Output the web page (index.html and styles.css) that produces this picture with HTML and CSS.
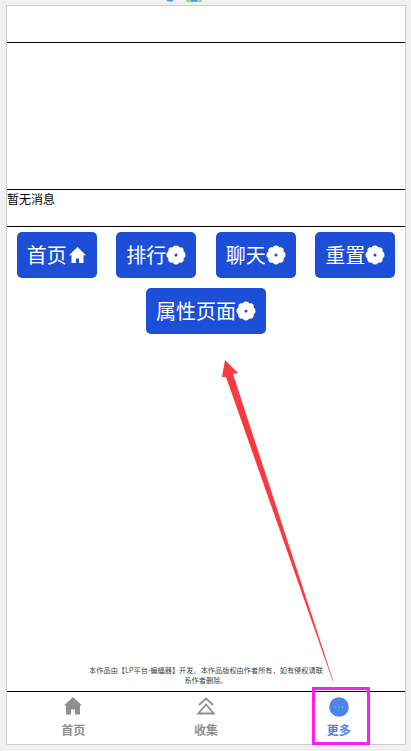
FILE: index.html
```html
<!DOCTYPE html>
<html lang="zh">
<head>
<meta charset="utf-8">
<title>更多</title>
<link rel="stylesheet" href="styles.css">
</head>
<body>
<svg class="top-glyphs" width="40" height="2" viewBox="0 0 40 2"><rect x="0" y="0" width="6" height="1.5" fill="#3aa0f5"/><rect x="19" y="0" width="16" height="2" fill="#8fe08f"/><rect x="24" y="0" width="6" height="1.5" fill="#3aa0f5"/></svg>
<main class="frame">
  <div class="head"></div>
  <div class="feed"></div>
  <div class="status">暂无消息</div>
  <nav class="actions">
    <button class="btn">首页<svg class="ico" viewBox="0 0 20 20"><path fill="#fff" d="M10.500 2 2 10.200h2.500V18H9v-4.500h3V18h4.500v-7.800H19L10.500 2z"/></svg></button>
    <button class="btn">排行<svg class="ico" viewBox="0 0 20 20"><use href="#flower"/></svg></button>
    <button class="btn">聊天<svg class="ico" viewBox="0 0 20 20"><use href="#flower"/></svg></button>
    <button class="btn">重置<svg class="ico" viewBox="0 0 20 20"><use href="#flower"/></svg></button>
    <button class="btn">属性页面<svg class="ico" viewBox="0 0 20 20"><use href="#flower"/></svg></button>
  </nav>
  <div class="spacer"></div>
  <p class="notice">本作品由【LP平台-蝙蝠器】开发。本作品版权由作者所有，如有侵权请联系作者删除。</p>
  <footer class="tabs">
    <div class="tab"><svg class="tab-ico" viewBox="0 0 20 20"><path fill="#8f8f8f" d="M10 0 1 8.500h2V17.500h5v-5h4v5h5V8.500h2L10 0z"/></svg><span>首页</span></div>
    <div class="tab"><svg class="tab-ico" viewBox="0 0 20 20"><path fill="none" stroke="#8f8f8f" stroke-width="1.800" d="M3 8 10 1.500 17 8M10 7.500 2.300 16.500h15.400L10 7.500z"/></svg><span>收集</span></div>
    <div class="tab tab-on"><svg class="tab-ico" viewBox="0 0 20 20"><circle cx="10" cy="10" r="9.800" fill="#4a86e8"/><circle cx="6.500" cy="10" r=".6" fill="#cfe0fa"/><circle cx="10" cy="10" r=".6" fill="#cfe0fa"/><circle cx="13.500" cy="10" r=".6" fill="#cfe0fa"/></svg><span>更多</span></div>
  </footer>
</main>
<svg class="arrow" width="411" height="751" viewBox="0 0 411 751"><path fill="#fb3a3f" d="M225 360 238 373 233 374 333.300 681 332.700 681 226 377 222 377z"/></svg>
<div class="mark"></div>
<svg width="0" height="0" class="defs"><defs><g id="flower"><g fill="#fff"><circle cx="10" cy="10" r="7.500"/><circle cx="10" cy="3.900" r="3.400"/><circle cx="10" cy="16.100" r="3.400"/><circle cx="3.900" cy="10" r="3.400"/><circle cx="16.100" cy="10" r="3.400"/><circle cx="5.700" cy="5.700" r="3.400"/><circle cx="14.300" cy="5.700" r="3.400"/><circle cx="5.700" cy="14.300" r="3.400"/><circle cx="14.300" cy="14.300" r="3.400"/></g><circle cx="10" cy="10" r="1.500" fill="#1d4ed8"/></g></defs></svg>
</body>
</html>
```
FILE: styles.css
```css
* { box-sizing: border-box; }
html, body { margin: 0; height: 100%; }
body {
  background: #f1f1f1;
  padding: 5px 5px 6px 6px;
  font-family: "Noto Sans CJK SC", "Liberation Sans", sans-serif;
  overflow: hidden;
}
.frame {
  height: 740px;
  background: #fff;
  border: 1px solid #ccc;
  display: flex;
  flex-direction: column;
}
.head { height: 37px; flex: none; border-bottom: 1px solid #000; }
.feed { height: 147px; flex: none; border-bottom: 1px solid #000; }
.status {
  height: 37px;
  flex: none;
  border-bottom: 1px solid #000;
  font-size: 12px;
  font-weight: 400;
  line-height: 18px;
  color: #000;
}
.actions {
  display: flex;
  flex-wrap: wrap;
  justify-content: space-around;
  gap: 10px 0;
  padding-top: 5px;
}
.btn {
  height: 46px;
  padding: 0 10px;
  border: 0;
  border-radius: 5px;
  background: #1d4ed8;
  color: #fff;
  font: 400 20px/30px "Noto Sans CJK SC", sans-serif;
  display: flex;
  align-items: center;
}
.ico { width: 20px; height: 20px; flex: none; }
.spacer { flex: 1; }
.notice {
  margin: 0 auto 6px;
  width: 240px;
  font-size: 7.200px;
  line-height: 10px;
  text-align: center;
  color: #444;
}
.tabs {
  height: 53px;
  flex: none;
  border-top: 1px solid #000;
  display: grid;
  grid-template-columns: repeat(3, 1fr);
}
.tab {
  display: flex;
  flex-direction: column;
  align-items: center;
  padding-top: 5px;
  font-size: 12px;
  font-weight: 700;
  line-height: 18px;
  color: #8f8f8f;
}
.tab-on { color: #4a86e8; }
.tab-ico { width: 20px; height: 20px; margin-bottom: 4px; }
.top-glyphs { position: absolute; left: 167px; top: 0; }
.arrow { position: absolute; left: 0; top: 0; pointer-events: none; }
.mark {
  position: absolute;
  left: 312px;
  top: 687px;
  width: 58px;
  height: 58px;
  border: 3px solid #fb1ff0;
}
.defs { position: absolute; }
```
